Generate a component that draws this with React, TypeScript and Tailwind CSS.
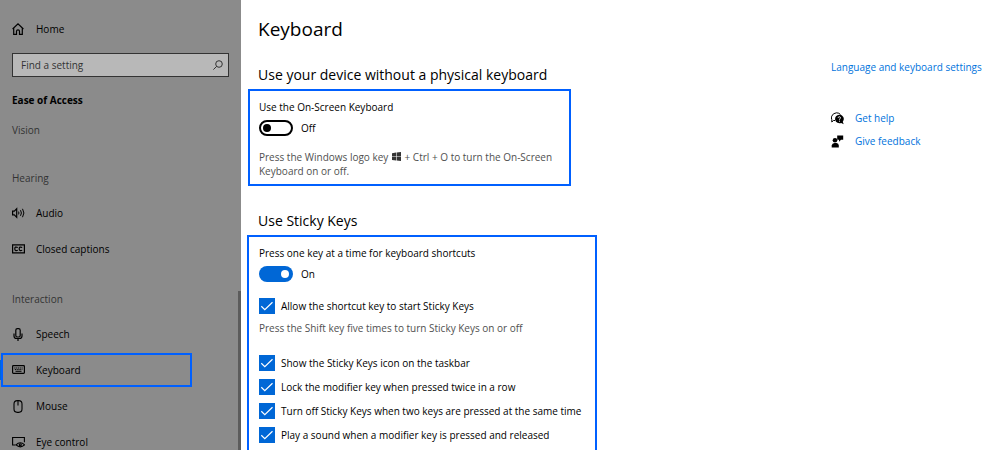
import React from "react";

function HomeIcon() {
	return (
		<svg className="size-3" viewBox="0 0 12 12" fill="none" stroke="currentColor" strokeWidth="1.2">
			<path d="M.6 6 6 .9 11.400 6M1.700 5.200v6.200h2.800V8.200Q4.500 6.900 6 6.900T7.500 8.200v3.200h2.800V5.200" />
		</svg>
	);
}

function SearchIcon() {
	return (
		<svg className="size-[10px]" viewBox="0 0 10 10" fill="none" stroke="currentColor">
			<circle cx="6" cy="4" r="3.300" />
			<path d="M3.700 6.300.4 9.600" />
		</svg>
	);
}

function AudioIcon() {
	return (
		<svg className="h-3 w-[13px] shrink-0" viewBox="0 0 13 12" fill="none" stroke="currentColor">
			<path d="M.6 4.200h1.700L4.700 1.700v8.600L2.300 7.800H.6z" strokeWidth="1.200" />
			<path d="M6.500 4.600q.9 1.400 0 2.800M8.500 3.200q1.800 2.800 0 5.600M10.500 1.800q2.800 4.200 0 8.400" />
		</svg>
	);
}

function CaptionsIcon() {
	return (
		<svg className="h-3 w-[13px] shrink-0" viewBox="0 0 13 12" fill="none" stroke="currentColor" strokeWidth="1.200">
			<path d="M.6 1.800h11.800v8H.6z" />
			<path d="M5.800 4.500Q2.800 3.200 2.800 5.800T5.800 7.200M10.200 4.500Q7.200 3.200 7.200 5.800T10.200 7.200" />
		</svg>
	);
}

function SpeechIcon() {
	return (
		<svg className="h-[13px] w-3" viewBox="0 0 12 13" fill="none" stroke="currentColor" strokeWidth="1.200">
			<rect x="3.800" y=".6" width="4.400" height="8.400" rx="1.600" />
			<path d="M2 5.500V8q0 2.500 2.500 2.500h3Q10 10.500 10 8V5.500M6 10.500V13" />
		</svg>
	);
}

function KeyboardIcon() {
	return (
		<svg className="h-3 w-[13px] shrink-0" viewBox="0 0 13 12" fill="none" stroke="currentColor">
			<rect x=".6" y="1.700" width="11.800" height="7.600" rx=".8" strokeWidth="1.200" />
			<path d="M2.300 4h8.400M2.800 5.600h7.600" strokeDasharray="1.200 .6" />
			<path d="M3.500 7.300h6" />
		</svg>
	);
}

function MouseIcon() {
	return (
		<svg className="h-[13px] w-3" viewBox="0 0 12 13" fill="none" stroke="currentColor" strokeWidth="1.100">
			<rect x="2" y=".6" width="8" height="11.800" rx="3.300" />
			<path d="M6 .6v4.800" />
		</svg>
	);
}

function EyeIcon() {
	return (
		<svg className="h-3 w-[13px] shrink-0" viewBox="0 0 13 12" fill="none" stroke="currentColor" strokeWidth="1.100">
			<path d="M3.500 9H.6V1.500h11.800v4.800" />
			<path d="M4 8.900Q8.300 4.500 12.600 8.900 8.300 12.800 4 8.900z" />
			<circle cx="8.300" cy="8.700" r="1" />
		</svg>
	);
}

function WindowsLogo() {
	return (
		<svg className="mx-px inline size-[9px] align-baseline text-[#333]" viewBox="0 0 8 8" fill="currentColor" aria-label="Windows">
			<path d="M0 1 3.600.5v3.200H0zM4.100.4 8 0v3.700H4.100zM0 4.200h3.600v3.300L0 7zM4.100 4.200H8V8l-3.900-.5z" />
		</svg>
	);
}

function HelpIcon() {
	return (
		<svg className="size-[13px]" viewBox="0 0 13 13" fill="none">
			<path d="M4 8.500H2.500L.8 10V7.600Q0 6 .7 4.200 2 1 5.500.8q2.500 0 4 1.700" stroke="#000" />
			<path d="M8.300 2.700a4.300 4.300 0 1 0 1.900 8.200l2.500 1.400-.9-2.600A4.300 4.300 0 0 0 8.300 2.700z" fill="#000" />
			<path d="M7.100 5.800q.2-1.200 1.400-1.100 1.200.3.900 1.400-.9.800-.9 1.700M8.500 8.700v1" stroke="#fff" strokeWidth=".9" />
		</svg>
	);
}

function FeedbackIcon() {
	return (
		<svg className="size-[13px]" viewBox="0 0 13 13" fill="#000">
			<path d="M6.200.5h6v4.300H10L8 6.800v-2H6.200z" />
			<circle cx="4" cy="5.200" r="2.300" />
			<path d="M.7 12.500V10.500Q1 8 3.500 8h2Q7.700 8 7.800 10.500v2z" />
		</svg>
	);
}

interface NavItemProps {
	icon: React.ReactNode;
	label: string;
	active?: boolean;
}

function NavItem({ icon, label, active }: NavItemProps) {
	return (
		<a href="#" className="relative flex h-9 items-center gap-3 pl-3 font-medium text-black">
			{active && (
				<>
					<span className="absolute inset-y-2 left-0 w-[2px] bg-[#0067d6]" />
					<span className="absolute inset-y-px left-px right-[49px] border-2 border-[#0060ff]" />
				</>
			)}
			<span className="flex w-3 shrink-0 justify-center">{icon}</span>
			<span>{label}</span>
		</a>
	);
}

function NavHeading({ children }: { children: React.ReactNode }) {
	return <h3 className="h-5 pl-3 leading-5 text-[#333]">{children}</h3>;
}

interface ToggleProps {
	id: string;
	label: string;
	on?: boolean;
}

function Toggle({ id, label, on }: ToggleProps) {
	return (
		<div>
			<p id={id} className="h-5 leading-5">
				{label}
			</p>
			<div className="mt-[3px] flex h-4 items-center gap-2">
				<button
					type="button"
					role="switch"
					aria-checked={!!on}
					aria-labelledby={id}
					className={
						on
							? "flex h-4 w-[34px] items-center justify-end rounded-full bg-[#0067d6] px-1"
							: "flex h-4 w-[34px] items-center rounded-full border-2 border-black px-[2px]"
					}
				>
					<span className={on ? "size-2 rounded-full bg-white" : "size-2 rounded-full bg-black"} />
				</button>
				<span>{on ? "On" : "Off"}</span>
			</div>
		</div>
	);
}

function CheckRow({ label }: { label: string }) {
	return (
		<label className="flex h-6 items-center gap-[6px]">
			<span className="relative size-4 shrink-0">
				<input
					type="checkbox"
					defaultChecked
					className="peer block size-4 appearance-none border border-black checked:border-[#0067d6] checked:bg-[#0067d6]"
				/>
				<svg
					className="pointer-events-none absolute inset-0 hidden size-4 peer-checked:block"
					viewBox="0 0 16 16"
					fill="none"
					stroke="#fff"
				>
					<path d="m2.300 8.300 3.500 3.400 7.700-7.400" strokeWidth="1.200" />
				</svg>
			</span>
			<span>{label}</span>
		</label>
	);
}

export default function App() {
	return (
		<div className="flex h-screen overflow-hidden bg-white font-['Open_Sans',sans-serif] text-[10px] text-black">
			<nav className="relative w-[241px] shrink-0 bg-[#8b8b8b] pt-[11px]">
				<NavItem icon={<HomeIcon />} label="Home" />
				<div className="mx-3 mt-[6px] flex h-6 items-center border border-[#333] bg-[#b8b8b8] pr-[5px] pl-2 text-[#333]">
					<input
						type="search"
						aria-label="Find a setting"
						placeholder="Find a setting"
						className="min-w-0 flex-1 outline-none placeholder:text-[#333]"
					/>
					<SearchIcon />
				</div>
				<h2 className="mt-[13px] h-5 pl-3 font-bold leading-5">Ease of Access</h2>
				<div className="mt-[10px]">
					<NavHeading>Vision</NavHeading>
				</div>
				<div className="mt-7">
					<NavHeading>Hearing</NavHeading>
					<div className="mt-[7px]">
						<NavItem icon={<AudioIcon />} label="Audio" />
						<NavItem icon={<CaptionsIcon />} label="Closed captions" />
					</div>
				</div>
				<div className="mt-[22px]">
					<NavHeading>Interaction</NavHeading>
					<div className="mt-[7px]">
						<NavItem icon={<SpeechIcon />} label="Speech" />
						<NavItem icon={<KeyboardIcon />} label="Keyboard" active />
						<NavItem icon={<MouseIcon />} label="Mouse" />
						<NavItem icon={<EyeIcon />} label="Eye control" />
					</div>
				</div>
				{/* scrollbar thumb */}
				<span className="absolute top-[291px] right-0 bottom-0 w-[3px] bg-[#5c5c5c]" />
			</nav>

			<main className="min-w-0 flex-1 pl-[6px]">
				<h1 className="mt-[14px] pl-[11px] text-[19px] leading-[30px]">Keyboard</h1>
				<h2 className="mt-5 pl-[11px] text-[14px] leading-[22px] font-medium">
					Use your device without a physical keyboard
				</h2>
				<section className="mt-[3px] ml-px w-[323px] border-2 border-[#0060ff] px-[9px] pt-[6px] pb-[6px]">
					<Toggle id="osk" label="Use the On-Screen Keyboard" />
					<p className="mt-[14px] leading-[14px] text-[#505050]">
						Press the Windows logo key <WindowsLogo /> + Ctrl + O to turn the On-Screen Keyboard on or off.
					</p>
				</section>
				<h2 className="mt-6 pl-[11px] text-[14px] leading-[22px] font-medium">Use Sticky Keys</h2>
				<section className="mt-[3px] w-[350px] border-2 border-[#0060ff] px-[10px] pt-[6px] pb-3">
					<Toggle id="sticky" label="Press one key at a time for keyboard shortcuts" on />
					<div className="mt-3">
						<CheckRow label="Allow the shortcut key to start Sticky Keys" />
						<p className="leading-5 text-[#505050]">Press the Shift key five times to turn Sticky Keys on or off</p>
					</div>
					<div className="mt-[13px]">
						<CheckRow label="Show the Sticky Keys icon on the taskbar" />
						<CheckRow label="Lock the modifier key when pressed twice in a row" />
						<CheckRow label="Turn off Sticky Keys when two keys are pressed at the same time" />
						<CheckRow label="Play a sound when a modifier key is pressed and released" />
					</div>
				</section>
			</main>

			<aside className="w-[169px] shrink-0 pt-[57px] font-medium text-[#0073dc]">
				<a href="#" className="block leading-5 whitespace-nowrap">
					Language and keyboard settings
				</a>
				<a href="#" className="mt-[29px] flex h-6 items-center gap-[11px]">
					<HelpIcon />
					Get help
				</a>
				<a href="#" className="flex h-[23px] items-center gap-[11px]">
					<FeedbackIcon />
					Give feedback
				</a>
			</aside>
		</div>
	);
}
